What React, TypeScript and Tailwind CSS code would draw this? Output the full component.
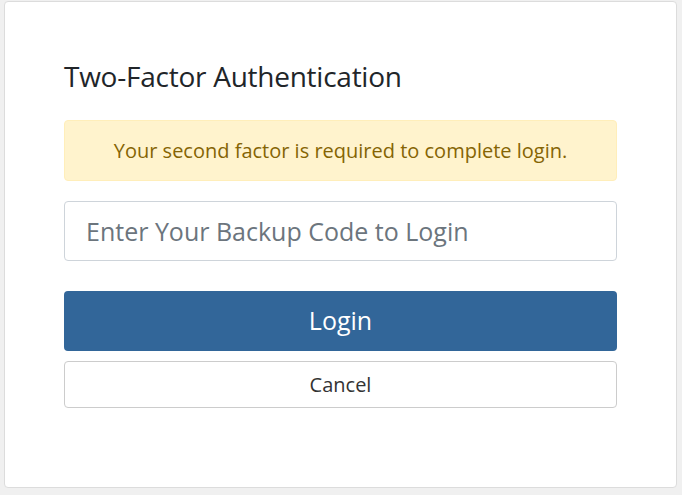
import React from 'react';

export default function App() {
  return (
    <div className="min-h-screen bg-[#f0f0f0] pl-[4px] pr-[5px] pt-[1px] pb-[7px]" style={{ fontFamily: '"Open Sans", sans-serif' }}>
      <div className="bg-white border border-[#dcdcdc] rounded-[4px] h-[487px] px-[59px] pt-[57px]">
        <h1 className="text-[28px] leading-[34px] tracking-[-0.25px] text-[#212529] mb-[27px]">Two-Factor Authentication</h1>
        <div className="bg-[#fff3cd] border border-[#ffeeba] rounded-[4px] h-[61px] flex items-center justify-center text-[20px] text-[#856404]">
          Your second factor is required to complete login.
        </div>
        <input
          className="mt-[20px] w-full h-[60px] border border-[#ced4da] rounded-[4px] px-[21px] text-[25px] text-[#495057] placeholder:text-[#6c757d] outline-none"
          placeholder="Enter Your Backup Code to Login"
        />
        <button className="mt-[30px] w-full h-[60px] rounded-[4px] bg-[#326699] text-white text-[25px]">
          Login
        </button>
        <button className="mt-[10px] w-full h-[47px] rounded-[4px] bg-white border border-[#cccccc] text-[#333333] text-[20px]">
          Cancel
        </button>
      </div>
    </div>
  );
}
